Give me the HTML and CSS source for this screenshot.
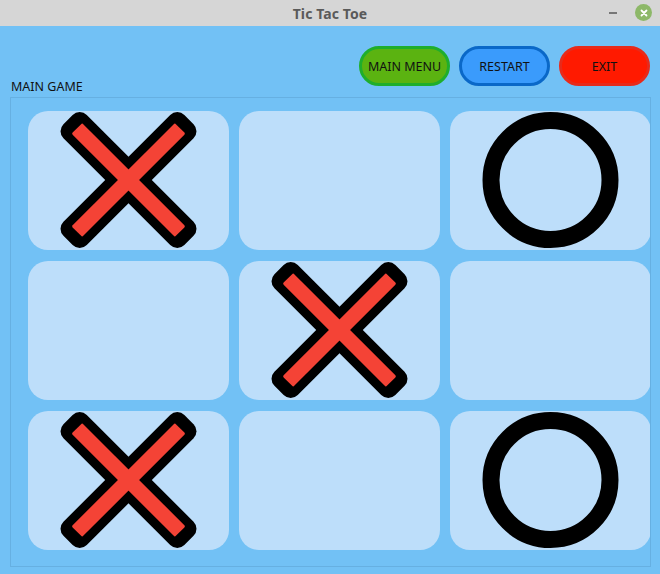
FILE: index.html
```html
<!DOCTYPE html>
<html>
<head>
<meta charset="utf-8">
<link rel="stylesheet" href="styles.css">
</head>
<body>
<div class="window">
  <div class="titlebar">
    <span class="title">Tic Tac Toe</span>
    <div class="controls">
      <span class="minimize"></span>
      <span class="close">
        <svg width="10" height="10" viewBox="0 0 10 10"><path d="M2.5 2.5 L7.5 7.5 M7.5 2.5 L2.5 7.5" stroke="#fff" stroke-width="1.8" stroke-linecap="round"/></svg>
      </span>
    </div>
  </div>
  <div class="content">
    <div class="toolbar">
      <button class="btn btn-menu">MAIN MENU</button>
      <button class="btn btn-restart">RESTART</button>
      <button class="btn btn-exit">EXIT</button>
    </div>
    <div class="label">MAIN GAME</div>
    <div class="group">
      <div class="board">
        <div class="cell">
          <svg class="mark" viewBox="0 0 201 139"><g transform="translate(100.5 69)"><rect x="-85.5" y="-16.5" width="171" height="33" rx="10" transform="rotate(45)" fill="#000"/><rect x="-85.5" y="-16.5" width="171" height="33" rx="10" transform="rotate(-45)" fill="#000"/><rect x="-73" y="-7.5" width="146" height="15" rx="1.5" transform="rotate(45)" fill="#f44336"/><rect x="-73" y="-7.5" width="146" height="15" rx="1.5" transform="rotate(-45)" fill="#f44336"/></g></svg>
        </div>
        <div class="cell"></div>
        <div class="cell">
          <svg class="mark" viewBox="0 0 201 139"><circle cx="100.5" cy="69" r="59.5" fill="none" stroke="#000" stroke-width="17"/></svg>
        </div>
        <div class="cell"></div>
        <div class="cell">
          <svg class="mark" viewBox="0 0 201 139"><g transform="translate(100.5 69)"><rect x="-85.5" y="-16.5" width="171" height="33" rx="10" transform="rotate(45)" fill="#000"/><rect x="-85.5" y="-16.5" width="171" height="33" rx="10" transform="rotate(-45)" fill="#000"/><rect x="-73" y="-7.5" width="146" height="15" rx="1.5" transform="rotate(45)" fill="#f44336"/><rect x="-73" y="-7.5" width="146" height="15" rx="1.5" transform="rotate(-45)" fill="#f44336"/></g></svg>
        </div>
        <div class="cell"></div>
        <div class="cell">
          <svg class="mark" viewBox="0 0 201 139"><g transform="translate(100.5 69)"><rect x="-85.5" y="-16.5" width="171" height="33" rx="10" transform="rotate(45)" fill="#000"/><rect x="-85.5" y="-16.5" width="171" height="33" rx="10" transform="rotate(-45)" fill="#000"/><rect x="-73" y="-7.5" width="146" height="15" rx="1.5" transform="rotate(45)" fill="#f44336"/><rect x="-73" y="-7.5" width="146" height="15" rx="1.5" transform="rotate(-45)" fill="#f44336"/></g></svg>
        </div>
        <div class="cell"></div>
        <div class="cell">
          <svg class="mark" viewBox="0 0 201 139"><circle cx="100.5" cy="69" r="59.5" fill="none" stroke="#000" stroke-width="17"/></svg>
        </div>
      </div>
    </div>
  </div>
</div>
</body>
</html>
```
FILE: styles.css
```css
* { box-sizing: border-box; }
html, body {
  margin: 0;
  padding: 0;
  width: 660px;
  height: 574px;
  overflow: hidden;
  background: #72c1f5;
  font-family: "Noto Sans", "Open Sans", sans-serif;
}
.window {
  width: 660px;
  height: 574px;
  display: flex;
  flex-direction: column;
}
.titlebar {
  height: 26px;
  background: #d6d6d6;
  display: flex;
  align-items: center;
  justify-content: center;
  position: relative;
  flex: none;
}
.title {
  font-weight: bold;
  font-size: 14px;
  color: #5a5a5a;
  letter-spacing: 0.1px;
}
.controls {
  position: absolute;
  right: 8px;
  top: 4px;
  display: flex;
  align-items: center;
  gap: 18px;
}
.minimize {
  display: block;
  width: 8px;
  height: 2px;
  background: #777;
}
.close {
  width: 17px;
  height: 17px;
  border-radius: 50%;
  background: #8db868;
  display: flex;
  align-items: center;
  justify-content: center;
}
.content {
  flex: 1;
  background: #72c1f5;
}
.toolbar {
  display: flex;
  justify-content: flex-end;
  gap: 9px;
  padding: 20px 10px 0 0;
}
.btn {
  width: 91px;
  height: 40px;
  border-radius: 20px;
  border: 3px solid;
  font-family: "Noto Sans", "Open Sans", sans-serif;
  font-size: 12.5px;
  color: #111;
  padding: 0;
}
.btn-menu { background: #5bb311; border-color: #1fae2c; }
.btn-restart { background: #3a9bfc; border-color: #0a68c8; }
.btn-exit { background: #ff1a00; border-color: #e82a1a; }
.label {
  margin-top: -8px;
  padding-left: 11px;
  font-size: 12.5px;
  line-height: 18px;
  color: #111;
  height: 19px;
}
.group {
  margin-left: 10px;
  width: 641px;
  height: 470px;
  border: 1px solid #66b0e2;
  padding: 13px 0 0 17px;
  overflow: hidden;
}
.board {
  display: grid;
  grid-template-columns: 201px 201px 201px;
  grid-template-rows: 139px 139px 139px;
  column-gap: 10px;
  row-gap: 11px;
}
.cell {
  background: #bddefa;
  border-radius: 20px;
  display: flex;
}
.mark {
  width: 201px;
  height: 139px;
  display: block;
}
```
